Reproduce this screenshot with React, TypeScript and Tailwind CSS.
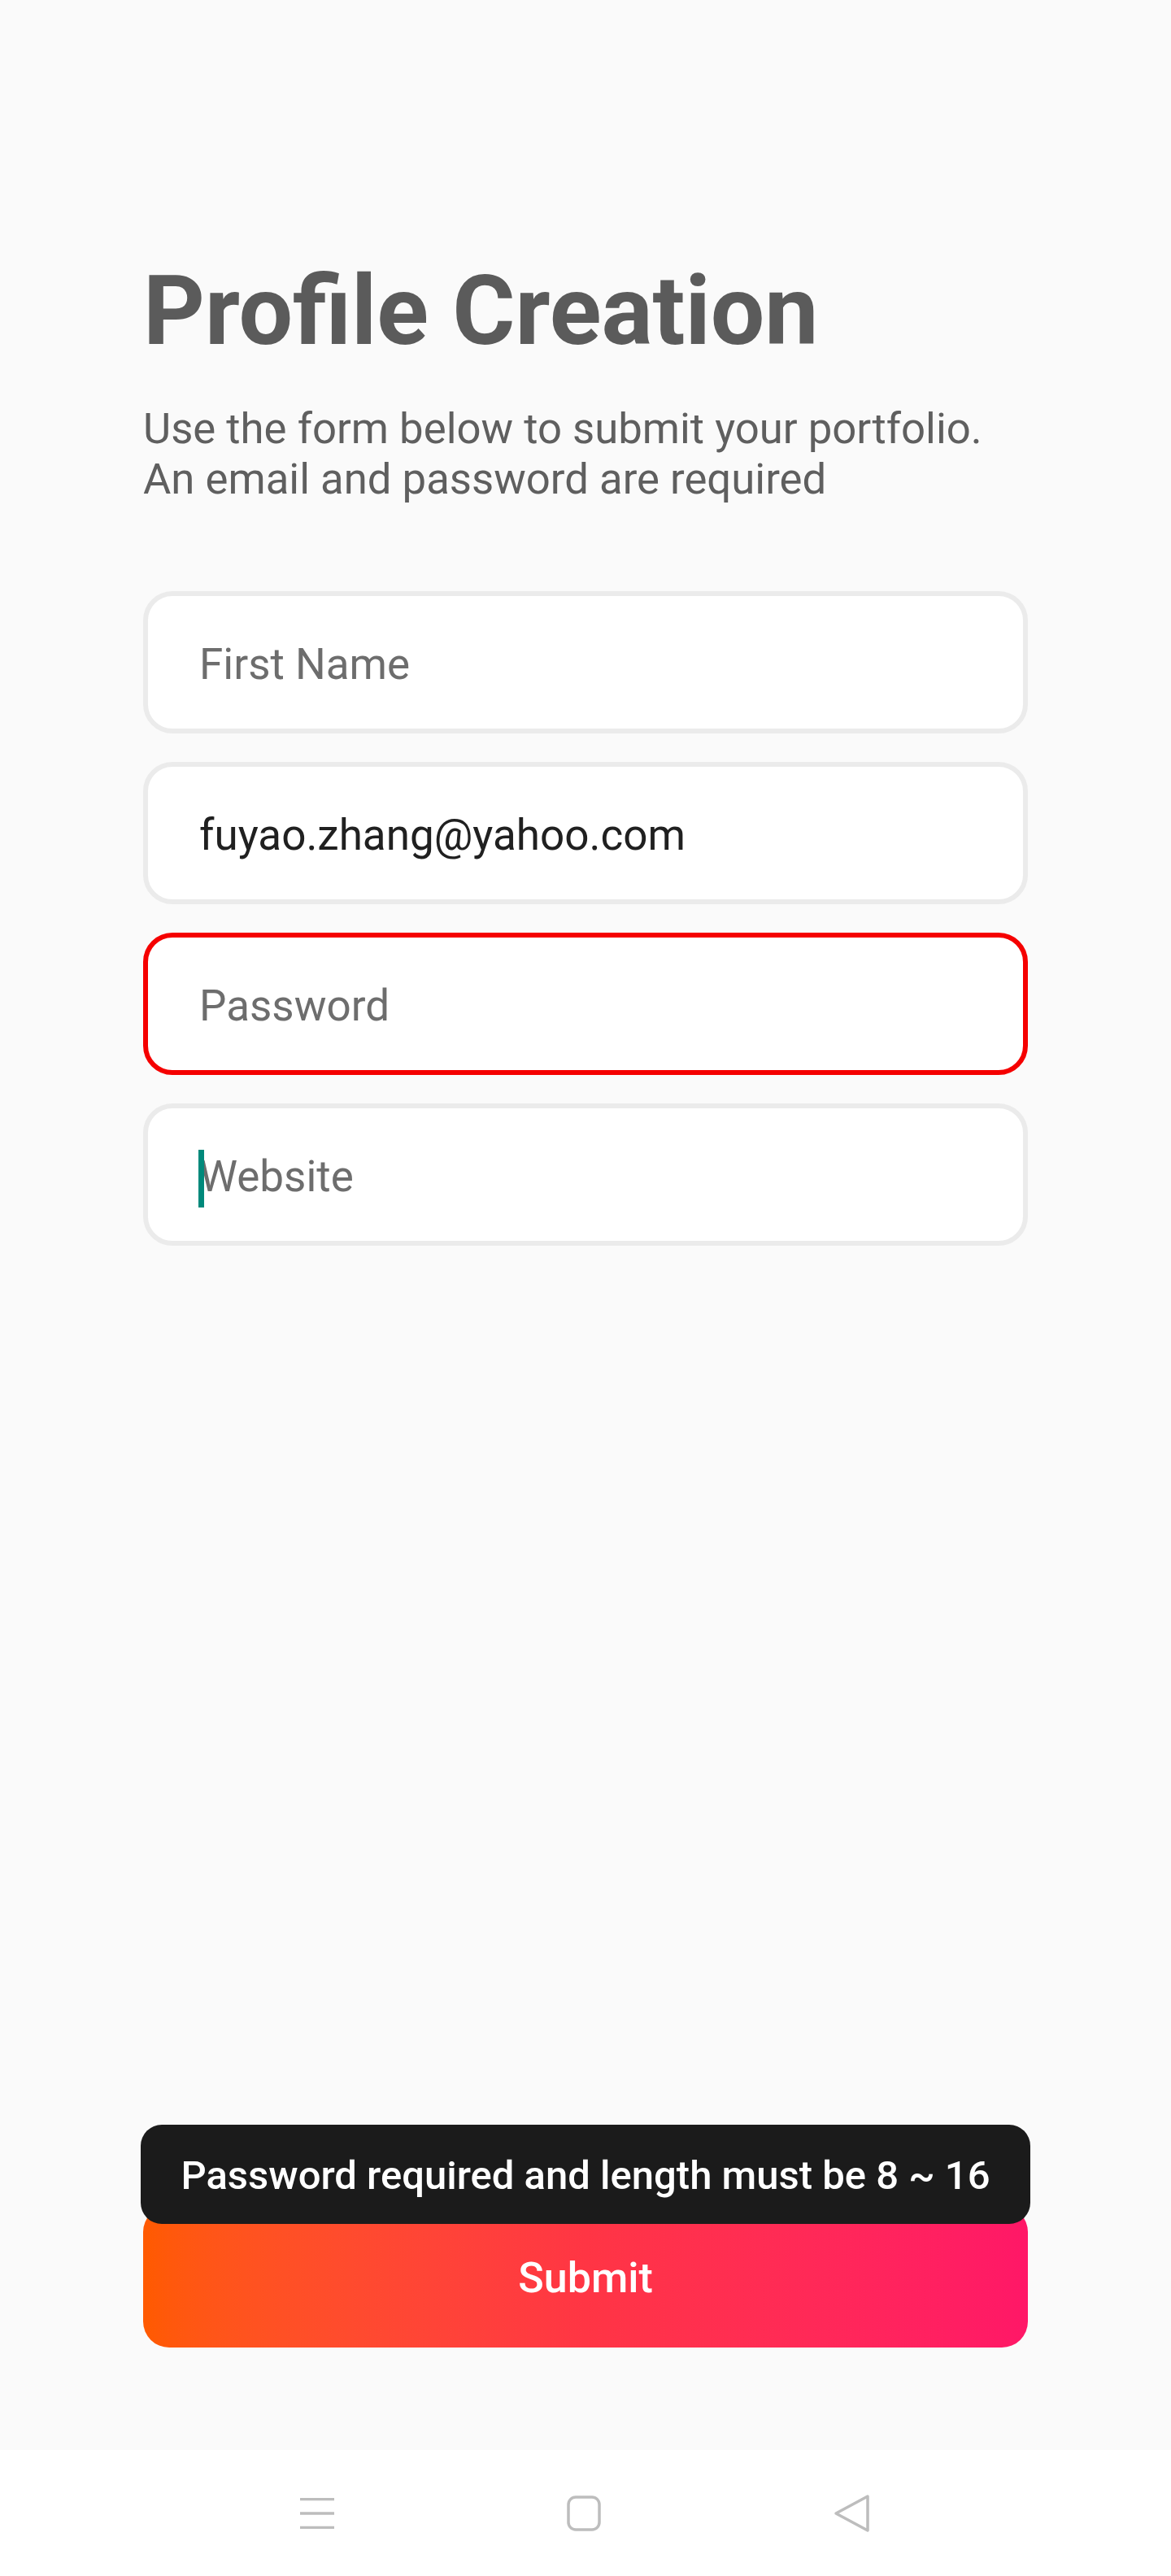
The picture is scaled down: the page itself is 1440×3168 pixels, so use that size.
import React from "react";

const fields = [
  { name: "firstName", placeholder: "First Name", value: "", error: false, caret: false },
  { name: "email", placeholder: "Email", value: "fuyao.zhang@yahoo.com", error: false, caret: false },
  { name: "password", placeholder: "Password", value: "", error: true, caret: false },
  { name: "website", placeholder: "Website", value: "", error: false, caret: true },
];

const MenuIcon = () => (
  <svg width="42" height="38" viewBox="0 0 42 38" fill="none">
    <line x1="0" y1="1.5" x2="42" y2="1.5" stroke="#bdbdbd" strokeWidth="3.5" />
    <line x1="0" y1="19" x2="42" y2="19" stroke="#bdbdbd" strokeWidth="3.5" />
    <line x1="0" y1="36.5" x2="42" y2="36.5" stroke="#bdbdbd" strokeWidth="3.5" />
  </svg>
);

const HomeIcon = () => (
  <svg width="42" height="44" viewBox="0 0 42 44" fill="none">
    <rect x="2" y="2" width="38" height="40" rx="9" stroke="#bdbdbd" strokeWidth="3.5" />
  </svg>
);

const BackIcon = () => (
  <svg width="46" height="48" viewBox="0 0 46 48" fill="none">
    <path
      d="M42 3 L3 24 L42 45 Z"
      stroke="#bdbdbd"
      strokeWidth="3.5"
      strokeLinejoin="round"
    />
  </svg>
);

const App: React.FC = () => {
  return (
    <div className="flex min-h-[3168px] w-full flex-col bg-[#fafafa] font-['Roboto','Liberation_Sans',sans-serif]">
      <div className="flex flex-1 flex-col px-[176px] pt-[324px]">
        <h1 className="text-[118px] font-bold leading-[118px] text-[#5b5b5b]">
          Profile Creation
        </h1>
        <p className="mt-[54px] text-[52.7px] leading-[62px] text-[#5f5f5f]">
          Use the form below to submit your portfolio.
          <br />
          An email and password are required
        </p>

        <form className="mt-[107px] flex flex-col gap-[35px]" onSubmit={(e) => e.preventDefault()}>
          {fields.map((field) => (
            <div
              key={field.name}
              className={`relative h-[175px] rounded-[36px] border-[6px] bg-white ${
                field.error ? "border-[#f50000]" : "border-[#ebebeb]"
              }`}
            >
              <input
                type="text"
                name={field.name}
                defaultValue={field.value}
                placeholder={field.placeholder}
                className="h-full w-full rounded-[30px] bg-transparent px-[63px] pt-[4px] text-[53px] text-[#202020] outline-none placeholder:text-[#6d6d6d]"
              />
              {/* text caret */}
              {field.caret && (
                <span className="absolute left-[62px] top-[51px] h-[71px] w-[7px] bg-[#00897b]" />
              )}
            </div>
          ))}
        </form>

        <div className="relative mb-[126px] mt-auto">
          <button
            type="submit"
            className="h-[174px] w-full rounded-[32px] bg-linear-to-r from-[#ff5a00] via-[#ff3544] to-[#ff1767] pt-[4px] text-[52px] font-medium text-white"
          >
            Submit
          </button>
          <div className="absolute left-[-3px] right-[-3px] top-[-100px] flex h-[122px] items-center justify-center rounded-[26px] bg-[#1b1b1b] pt-[4px] text-[49px] font-medium text-white">
            Password required and length must be 8 ~ 16
          </div>
        </div>
      </div>

      <div className="flex h-[155px] items-center justify-center gap-[286px] bg-white">
        <MenuIcon />
        <HomeIcon />
        <BackIcon />
      </div>
    </div>
  );
};

export default App;
